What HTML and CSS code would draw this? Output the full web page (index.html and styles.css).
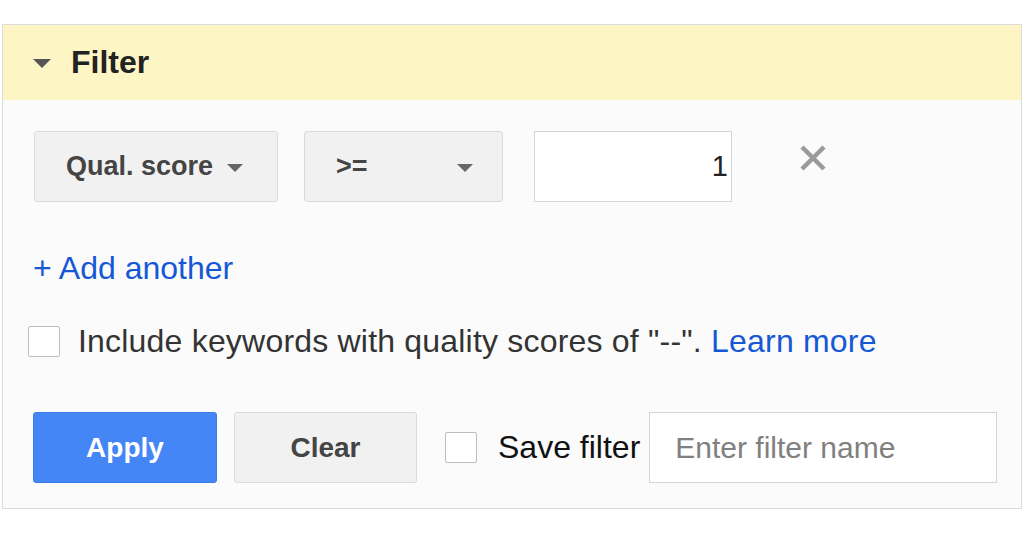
FILE: index.html
```html
<!DOCTYPE html>
<html>
<head>
<meta charset="utf-8">
<link rel="stylesheet" href="styles.css">
</head>
<body>
<div class="panel">
  <div class="header">
    <span class="tri"></span>
    <span class="title">Filter</span>
  </div>
  <div class="body">
    <div class="row1">
      <div class="select sel-field">Qual. score <span class="arrow"></span></div>
      <div class="select sel-op"><span>&gt;=</span> <span class="arrow"></span></div>
      <div class="numinput">1</div>
      <svg class="close" width="30" height="28" viewBox="0 0 30 28"><path d="M4 3 L26 25 M26 3 L4 25" stroke="#9a9a9a" stroke-width="4.5" stroke-linecap="butt"/></svg>
    </div>
    <div class="add">+ Add another</div>
    <div class="include">
      <span class="cb"></span>
      <span class="inc-text">Include keywords with quality scores of "--". <span class="link">Learn more</span></span>
    </div>
    <div class="actions">
      <div class="btn apply">Apply</div>
      <div class="btn clear">Clear</div>
      <span class="cb cb-save"></span>
      <span class="save-label">Save filter</span>
      <div class="name-input">Enter filter name</div>
    </div>
  </div>
</div>
</body>
</html>
```
FILE: styles.css
```css
html, body {
  margin: 0;
  padding: 0;
  background: #ffffff;
  font-family: "Liberation Sans", Arial, sans-serif;
}
.panel {
  margin: 24px 0 0 2px;
  width: 1018px;
  border: 1px solid #dcdcdc;
  background: #fbfbfb;
}
.header {
  height: 75px;
  background: #fdf6c4;
  display: flex;
  align-items: center;
  padding-left: 30px;
  box-sizing: border-box;
}
.tri {
  width: 0;
  height: 0;
  border-left: 9px solid transparent;
  border-right: 9px solid transparent;
  border-top: 9px solid #555;
  margin-right: 20px;
  margin-top: 1px;
}
.title {
  font-size: 32px;
  font-weight: bold;
  color: #222;
}
.body {
  padding: 31px 0 25px 31px;
}
.row1 {
  display: flex;
  align-items: flex-start;
  height: 71px;
}
.select {
  box-sizing: border-box;
  height: 71px;
  background: #f1f1f1;
  border: 1px solid #dadada;
  border-radius: 3px;
  display: flex;
  align-items: center;
  font-size: 27px;
  font-weight: bold;
  color: #444;
}
.sel-field {
  width: 244px;
  padding-left: 31px;
}
.sel-field .arrow {
  margin-left: 14px;
}
.sel-op {
  width: 199px;
  margin-left: 26px;
  padding-left: 31px;
  justify-content: space-between;
  padding-right: 29px;
}
.arrow {
  width: 0;
  height: 0;
  border-left: 8px solid transparent;
  border-right: 8px solid transparent;
  border-top: 8px solid #666;
  margin-top: 2px;
}
.numinput {
  box-sizing: border-box;
  width: 198px;
  height: 71px;
  margin-left: 31px;
  background: #fff;
  border: 1px solid #d4d4d4;
  font-size: 29px;
  color: #222;
  text-align: right;
  padding-right: 3px;
  padding-top: 18px;
}
.close {
  margin-left: 66px;
  margin-top: 13px;
}
.add {
  margin-top: 49px;
  font-size: 32px;
  color: #1558d6;
  line-height: 34px;
  margin-left: -1px;
}
.include {
  margin-top: 38px;
  display: flex;
  align-items: center;
  margin-left: -6px;
}
.cb {
  box-sizing: border-box;
  width: 32px;
  height: 31px;
  border: 1px solid #bdbdbd;
  border-radius: 2px;
  background: #fff;
  flex: none;
}
.inc-text {
  margin-left: 18px;
  font-size: 32px;
  letter-spacing: 0.2px;
  color: #333;
}
.link {
  color: #1558d6;
}
.actions {
  margin-top: 52px;
  display: flex;
  align-items: center;
  margin-left: -1px;
}
.btn {
  box-sizing: border-box;
  height: 71px;
  display: flex;
  align-items: center;
  justify-content: center;
  font-size: 28px;
  font-weight: bold;
  border-radius: 3px;
}
.apply {
  width: 184px;
  background: #4486f5;
  border: 1px solid #3b7be8;
  color: #fff;
}
.clear {
  width: 183px;
  margin-left: 17px;
  background: #f1f1f1;
  border: 1px solid #dadada;
  color: #444;
}
.cb-save {
  margin-left: 28px;
}
.save-label {
  margin-left: 21px;
  font-size: 32px;
  color: #111;
}
.name-input {
  box-sizing: border-box;
  width: 348px;
  height: 71px;
  margin-left: 9px;
  background: #fff;
  border: 1px solid #d4d4d4;
  font-size: 30px;
  color: #808080;
  display: flex;
  align-items: center;
  padding-left: 25px;
}
```
